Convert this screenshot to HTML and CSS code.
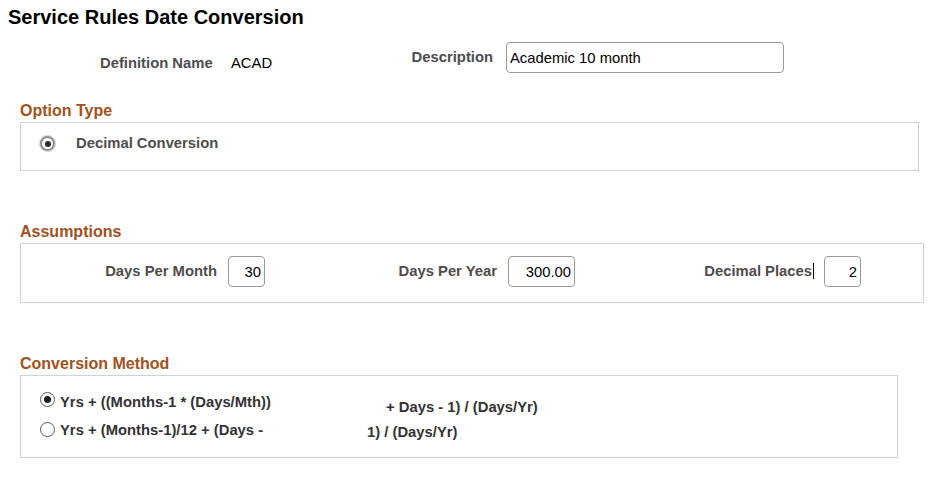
FILE: index.html
```html
<!DOCTYPE html>
<html lang="en">
<head>
  <meta charset="UTF-8">
  <title>Service Rules Date Conversion</title>
  <link rel="stylesheet" href="styles.css">
</head>
<body>

  <h1 class="page-title">Service Rules Date Conversion</h1>

  <div class="hdr">
    <div class="fld fld-def">
      <span class="lbl">Definition Name</span>
      <span class="val">ACAD</span>
    </div>
    <div class="fld fld-desc">
      <label class="lbl" for="descr">Description</label>
      <input type="text" id="descr" class="txt" value="Academic 10 month">
    </div>
  </div>

  <h2 class="grp-title">Option Type</h2>
  <div class="grp grp-option">
    <div class="opt">
      <span class="radio soft on"></span>
      <span class="opt-lbl">Decimal Conversion</span>
    </div>
  </div>

  <h2 class="grp-title">Assumptions</h2>
  <div class="grp grp-assume">
    <div class="num-fld f1">
      <label class="lbl" for="dpm">Days Per Month</label>
      <input type="text" id="dpm" class="num w-s" value="30">
    </div>
    <div class="num-fld f2">
      <label class="lbl" for="dpy">Days Per Year</label>
      <input type="text" id="dpy" class="num w-l" value="300.00">
    </div>
    <div class="num-fld f3">
      <label class="lbl caret" for="dec">Decimal Places</label>
      <input type="text" id="dec" class="num w-s" value="2">
    </div>
  </div>

  <h2 class="grp-title">Conversion Method</h2>
  <div class="grp grp-method">
    <div class="m-row r1">
      <span class="radio on"></span>
      <span class="m-a">Yrs + ((Months-1 * (Days/Mth))</span>
      <span class="m-b">+ Days - 1) / (Days/Yr)</span>
    </div>
    <div class="m-row r2">
      <span class="radio"></span>
      <span class="m-a">Yrs + (Months-1)/12 + (Days -</span>
      <span class="m-b">1) / (Days/Yr)</span>
    </div>
  </div>

</body>
</html>
```

FILE: styles.css
```css
body {
  margin: 0;
  font-family: "Liberation Sans", Arial, sans-serif;
  font-size: 14.8px;
  line-height: 17px;
  color: #333;
  background-color: #fff;
}

.page-title {
  margin: 0;
  padding: 6px 0 0 8px;
  font-size: 20px;
  line-height: 23px;
  font-weight: bold;
  color: #000;
}

.lbl {
  flex: none;
  font-weight: bold;
  white-space: nowrap;
  color: #4d4d4d;
}

/* header fields */
.hdr {
  display: flex;
  margin: 13px 0 29px;
  height: 31px;
}

.fld {
  display: flex;
  align-items: flex-start;
  flex: none;
}

.fld-def {
  width: 290px;
  margin-left: 100px;
  padding-top: 13px;
}

.fld-def .lbl {
  width: 112px;
  text-align: right;
}

.fld-def .val {
  margin-left: 19px;
  color: #000;
}

.fld-desc .lbl {
  width: 103px;
  margin-top: 7px;
  text-align: right;
}

.txt, .num {
  box-sizing: border-box;
  height: 31px;
  border: 1px solid #999;
  border-radius: 4px;
  font-family: inherit;
  font-size: 14.8px;
  color: #000;
  background-color: #fff;
}

.txt {
  width: 278px;
  margin-left: 13px;
  padding: 0 3px;
}

/* group boxes */
.grp-title {
  margin: 0 0 2px 20px;
  font-size: 16px;
  line-height: 18px;
  font-weight: bold;
  color: #a3511b;
}

.grp {
  box-sizing: border-box;
  margin: 0 0 52px 20px;
  border: 1px solid #cfd2d6;
}

.grp-option {
  width: 899px;
  padding: 12px 19px 18px;
}

.opt {
  display: flex;
  align-items: center;
}

.opt-lbl {
  margin-left: 21px;
  font-weight: bold;
  color: #4d4d4d;
}

/* radios */
.radio {
  position: relative;
  flex: none;
  box-sizing: border-box;
  width: 15px;
  height: 15px;
  border: 1px solid #5a5a5a;
  border-radius: 50%;
  background-color: #fff;
}

.radio.on::after {
  content: "";
  position: absolute;
  left: 3px;
  top: 3px;
  width: 7px;
  height: 7px;
  border-radius: 50%;
  background-color: #1e1e1e;
}

.radio.soft {
  width: 15px;
  height: 15px;
  border: 2px solid #8e8e8e;
  box-shadow: 0 0 1px 1px #d4d4d4;
}

.radio.soft::after {
  left: 2.5px;
  top: 2.5px;
  width: 6px;
  height: 6px;
  background-color: #2b2b2b;
}

/* assumptions */
.grp-assume {
  display: flex;
  align-items: center;
  width: 904px;
  padding: 12px 0 15px;
}

.num-fld {
  display: flex;
  align-items: center;
}

.num-fld .lbl {
  text-align: right;
}

.f1 .lbl { width: 196px; }
.f2 .lbl { width: 232px; }
.f3 .lbl { width: 237px; }

.num {
  margin-left: 11px;
  padding: 0 3px;
  text-align: right;
}

.f3 .num {
  margin-left: 12px;
}

.w-s { width: 37px; }
.w-l { width: 67px; }

.caret::after {
  content: "";
  display: inline-block;
  width: 1px;
  height: 16px;
  margin-left: 1px;
  margin-right: -2px;
  vertical-align: -3px;
  background-color: #000;
}

/* conversion method */
.grp-method {
  width: 878px;
  margin-bottom: 0;
  padding: 15px 19px 6px;
}

.m-row {
  display: flex;
  align-items: flex-start;
  height: 30px;
  font-weight: bold;
  color: #333;
}

.m-row .radio {
  margin-top: 1px;
}

.m-a {
  flex: none;
  width: 307px;
  margin-left: 5px;
}

.r1 .m-a { margin-top: 3px; }
.r1 .m-b { margin-top: 8px; padding-left: 19px; }
.r2 .m-a { margin-top: 1px; }
.r2 .m-b { margin-top: 3px; }
```
